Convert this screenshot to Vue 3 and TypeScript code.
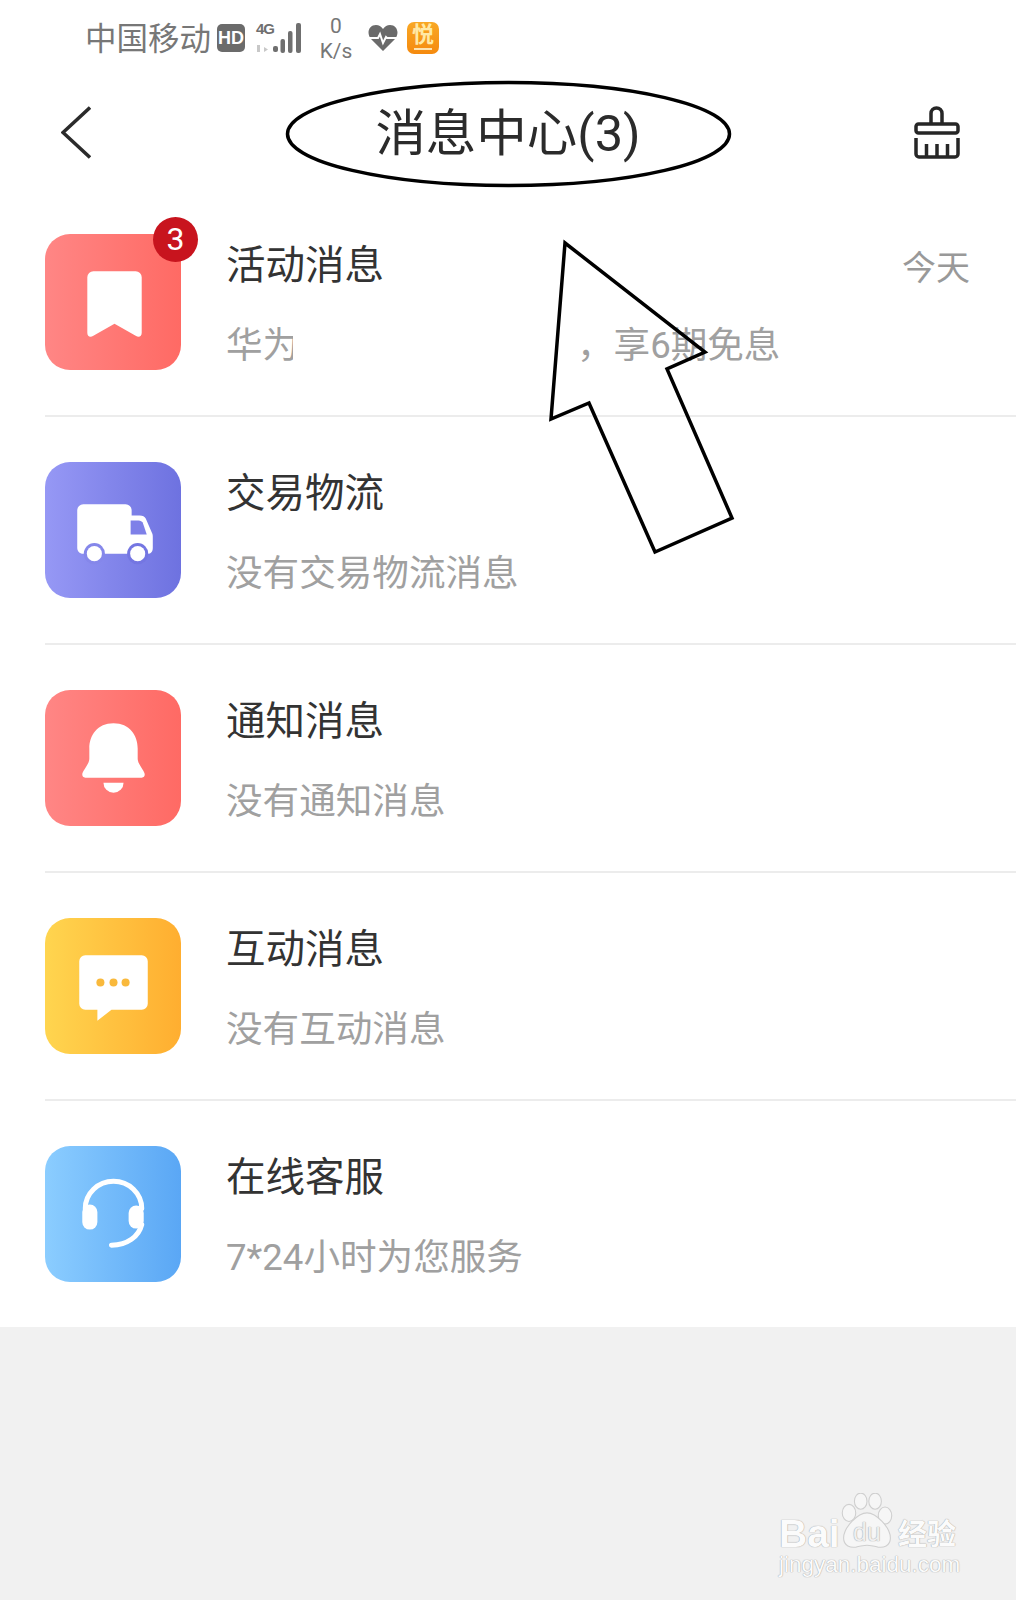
<template>
  <div class="page">
    <div class="sheet">
      <div class="status-bar">
        <span class="carrier">中国移动</span>
        <span class="hd">HD</span>
        <span class="signal">
          <span class="net">4G</span>
          <svg class="bars" width="50" height="32" viewBox="0 0 50 32">
            <path d="M2 23h3v7H2zM7 20v10M9 25l4 2.500-4 2.500z" fill="#c8c8c8" />
            <g fill="#6f6f6f">
              <rect x="18" y="24" width="5" height="6" rx="2" />
              <rect x="25.500" y="17" width="4.500" height="14" rx="2" />
              <rect x="33" y="9" width="4.500" height="22" rx="2" />
              <rect x="41" y="1" width="5" height="30" rx="2" />
            </g>
          </svg>
        </span>
        <span class="speed"><b>0</b><i>K/s</i></span>
        <svg class="heart" width="30" height="28" viewBox="0 0 30 28">
          <path d="M15 27 3 15C-2 9 1 1 8 1c3 0 5 1.500 7 4 2-2.500 4-4 7-4 7 0 10 8 5 14z" fill="#6b6b6b" />
          <path d="M1 14h9l2-4 3 9 3-6 1 1h10" fill="none" stroke="#fff" stroke-width="2" />
        </svg>
        <span class="app-badge"><span>悦</span><em></em></span>
      </div>

      <header class="top">
        <svg width="30" height="54" viewBox="0 0 30 54">
          <path d="M29 1.500 2 26.500l27 25" fill="none" stroke="#2b2b2b" stroke-width="3.500" />
        </svg>
        <h1>消息中心(3)</h1>
        <svg width="46" height="53" viewBox="0 0 46 53">
          <g fill="none" stroke="#262626" stroke-width="3.500" stroke-linejoin="round">
            <path d="M17 17.500V7.500a5.500 5.500 0 0 1 11 0v10" />
            <rect x="2" y="18" width="42" height="9" rx="2.500" />
            <path d="M2 32v16a3 3 0 0 0 3 3h36a3 3 0 0 0 3-3V32M12.500 38v13M23 38v13M33.500 38v13" />
          </g>
        </svg>
      </header>

      <ul class="list">
        <li v-for="item in items" :key="item.title" class="row">
          <div class="icon" :class="item.kind">
            <svg width="136" height="136" viewBox="0 0 135 135">
              <path
                v-if="item.kind === 'mark'"
                d="M48 37h42a6 6 0 0 1 6 6v55c0 4-3 5-6 3L69 89l-21 12c-3 2-6 1-6-3V43a6 6 0 0 1 6-6z"
                fill="#fff"
              />
              <g v-else-if="item.kind === 'truck'">
                <path
                  d="M38 42h42a6 6 0 0 1 6 6v5h8c3 0 5 1 6 3l6 14c1 2 1 3 1 5v10c0 4-2 6-5 6H38c-4 0-6-3-6-6V48a6 6 0 0 1 6-6z"
                  fill="#fff"
                />
                <path d="M85 58h8c2 0 3 1 4 2l4 12H85z" fill="#7e80e8" />
                <circle cx="49" cy="91" r="10.500" fill="#8587ea" />
                <circle cx="92" cy="91" r="10.500" fill="#7476e2" />
                <circle cx="49" cy="91" r="7.500" fill="#fff" />
                <circle cx="92" cy="91" r="7.500" fill="#fff" />
              </g>
              <g v-else-if="item.kind === 'bell'" fill="#fff">
                <path d="M68 33C52 33 44 45 44 58v10c0 6-7 12-7 16q0 3 3 3h56q3 0 3-3c0-4-7-10-7-16V58c0-13-8-25-24-25z" />
                <path d="M58 92h20a10 10 0 0 1-20 0z" />
              </g>
              <g v-else-if="item.kind === 'chat'">
                <path d="M40 37h56a6 6 0 0 1 6 6v42a6 6 0 0 1-6 6H66l-14 11V91H40a6 6 0 0 1-6-6V43a6 6 0 0 1 6-6z" fill="#fff" />
                <g fill="#f9b93c">
                  <circle cx="55" cy="64" r="4" />
                  <circle cx="68" cy="64" r="4" />
                  <circle cx="80" cy="64" r="4" />
                </g>
              </g>
              <g v-else>
                <g fill="none" stroke="#fff" stroke-width="5" stroke-linecap="round">
                  <path d="M40 62a28 27 0 0 1 56 0" />
                  <path d="M96 78C93 90 82 98 66 98.500" />
                </g>
                <rect x="37" y="58" width="15" height="25" rx="7.500" fill="#fff" />
                <rect x="83" y="59" width="15" height="23" rx="7.500" fill="#fff" />
              </g>
            </svg>
            <span v-if="item.count" class="badge">{{ item.count }}</span>
          </div>

          <div class="text">
            <div class="title-line">
              <span class="title">{{ item.title }}</span>
              <span v-if="item.time" class="time">{{ item.time }}</span>
            </div>
            <p v-if="item.cut" class="sub">
              <span class="cut">{{ item.cut }}</span><span class="rest">{{ item.sub }}</span>
            </p>
            <p v-else class="sub">{{ item.sub }}</p>
          </div>
        </li>
      </ul>
    </div>

    <!-- hand drawn marks on top of the screenshot -->
    <svg class="marks" width="1016" height="1600" viewBox="0 0 1016 1600">
      <g fill="none" stroke="#000">
        <ellipse cx="508.500" cy="134" rx="221" ry="51.500" stroke-width="3.500" />
        <path d="M565 243 705 352 667 369 732 518 655 552 589 403 551 419z" stroke-width="3.500" />
      </g>
    </svg>

    <div class="watermark">
      <div class="logo-line">
        <span class="bai">Bai</span>
        <span class="paw">
          <svg width="54" height="56" viewBox="0 0 60 62">
            <g fill="#f6f6f6" stroke="#cfcfcf" stroke-width="1.200">
              <ellipse cx="10" cy="22" rx="7.500" ry="9.500" />
              <ellipse cx="23" cy="9" rx="7" ry="9" />
              <ellipse cx="39" cy="9" rx="7" ry="9" />
              <ellipse cx="50" cy="25" rx="7.500" ry="9.500" />
              <path d="M30 22c10 0 26 16 26 28 0 9-8 11-14 10-4-1-8-2-12-2s-8 1-12 2C12 61 4 59 4 50c0-12 16-28 26-28z" />
            </g>
          </svg>
          <span class="du">du</span>
        </span>
        <span class="jy">经验</span>
      </div>
      <div class="domain">jingyan.baidu.com</div>
    </div>
  </div>
</template>

<script setup lang="ts">
interface Item {
  kind: 'mark' | 'truck' | 'bell' | 'chat' | 'phone';
  title: string;
  sub: string;
  cut?: string;
  time?: string;
  count?: number;
}

const items: Item[] = [
  { kind: 'mark', title: '活动消息', cut: '华为', sub: '，享6期免息', time: '今天', count: 3 },
  { kind: 'truck', title: '交易物流', sub: '没有交易物流消息' },
  { kind: 'bell', title: '通知消息', sub: '没有通知消息' },
  { kind: 'chat', title: '互动消息', sub: '没有互动消息' },
  { kind: 'phone', title: '在线客服', sub: '7*24小时为您服务' },
];
</script>

<style scoped>
.page {
  position: relative;
  width: 1016px;
  height: 1600px;
  overflow: hidden;
  background: #f1f1f1;
  font-family: Roboto, "Noto Sans CJK SC", sans-serif;
}

.sheet {
  background: #fff;
}

.status-bar {
  display: flex;
  align-items: center;
  height: 76px;
  padding-left: 85px;
  color: #6f6f6f;
}

.carrier {
  margin-top: 4px;
  font-size: 31.500px;
  line-height: 1;
  color: #777;
}

.hd {
  width: 28px;
  height: 28px;
  margin-left: 6px;
  border-radius: 5px;
  background: #6b6b6b;
  color: #fff;
  font: bold 18px/28px "Liberation Sans", sans-serif;
  text-align: center;
}

.signal {
  position: relative;
  display: block;
  width: 50px;
  height: 32px;
  margin-left: 10px;
}

.net {
  position: absolute;
  left: 1px;
  top: -1px;
  font: bold 15px/15px "Liberation Sans", sans-serif;
  letter-spacing: -1px;
  color: #6f6f6f;
}

.speed {
  display: flex;
  flex-direction: column;
  align-items: center;
  width: 34px;
  margin-left: 14px;
  margin-top: 3px;
  color: #777;
}

.speed b {
  font-weight: 400;
  font-size: 21px;
  line-height: 24px;
}

.speed i {
  font-style: normal;
  font-size: 21px;
  line-height: 27px;
}

.heart {
  margin-left: 15px;
}

.app-badge {
  display: flex;
  flex-direction: column;
  align-items: center;
  width: 32px;
  height: 32px;
  margin-left: 9px;
  border-radius: 7px;
  background: linear-gradient(#f9a825, #f58a0e);
  color: #ffe9a6;
  font-size: 22px;
  line-height: 25px;
  font-weight: 700;
}

.app-badge em {
  width: 18px;
  height: 2px;
  margin-top: 1px;
  background: #fde3b0;
}

.top {
  display: flex;
  align-items: center;
  justify-content: space-between;
  height: 113px;
  padding: 0 56px 0 61px;
}

.top h1 {
  margin: 2px 0 0 11px;
  font-size: 50.500px;
  font-weight: 400;
  line-height: 60px;
  color: #2b2b2b;
}

.list {
  margin: 0;
  padding: 0;
  list-style: none;
}

.row {
  display: flex;
  gap: 45px;
  margin-left: 45px;
  padding: 45px 46px 45px 0;
  border-bottom: 2px solid #ececec;
}

.row:last-child {
  border-bottom: none;
}

.icon {
  position: relative;
  flex: none;
  width: 136px;
  height: 136px;
  border-radius: 25px;
}

.icon svg {
  display: block;
}

.mark,
.bell {
  background: linear-gradient(90deg, #ff8685, #ff6a64);
}

.truck {
  background: linear-gradient(90deg, #9698f5, #6e72e0);
}

.chat {
  background: linear-gradient(90deg, #ffd54f, #ffae30);
}

.phone {
  background: linear-gradient(90deg, #8bcdff, #5aa7f5);
}

.badge {
  position: absolute;
  top: -17px;
  right: -17px;
  width: 45px;
  height: 45px;
  border-radius: 50%;
  background: #c8141e;
  color: #fff;
  font-size: 32px;
  line-height: 44px;
  text-align: center;
}

.text {
  flex: 1;
  min-width: 0;
  padding-top: 5px;
}

.title-line {
  display: flex;
  align-items: center;
  justify-content: space-between;
  height: 54px;
}

.title {
  font-size: 39.500px;
  line-height: 54px;
  color: #333;
}

.time {
  margin-top: 3px;
  font-size: 34px;
  line-height: 54px;
  color: #999;
}

.sub {
  margin: 29px 0 0;
  font-size: 36.600px;
  line-height: 48px;
  color: #a0a0a0;
  white-space: nowrap;
}

.cut {
  display: inline-block;
  width: 67px;
  overflow: hidden;
  vertical-align: top;
}

.rest {
  margin-left: 284px;
}

.marks {
  position: absolute;
  left: 0;
  top: 0;
  pointer-events: none;
}

.watermark {
  position: absolute;
  left: 779px;
  top: 1493px;
  width: 190px;
  color: #fbfbfb;
  font-family: "Liberation Sans", "Noto Sans CJK SC", sans-serif;
  text-shadow: 0 0 1px #a8a8a8, 0 0 1px #a8a8a8;
}

.logo-line {
  display: flex;
  align-items: flex-end;
  height: 56px;
}

.bai {
  width: 61px;
  margin-bottom: -3px;
  font-size: 39px;
  font-weight: 700;
  line-height: 36px;
}

.paw {
  position: relative;
  height: 56px;
}

.du {
  position: absolute;
  left: 6px;
  bottom: 3px;
  width: 42px;
  font-size: 25px;
  line-height: 28px;
  text-align: center;
  color: #efefef;
}

.jy {
  margin: 0 0 -3px 4px;
  font-size: 29px;
  line-height: 34px;
  font-weight: 700;
}

.domain {
  margin-top: 3px;
  font-size: 22.500px;
  line-height: 26px;
}
</style>

<style>
html,
body {
  background: #f1f1f1;
}
</style>
